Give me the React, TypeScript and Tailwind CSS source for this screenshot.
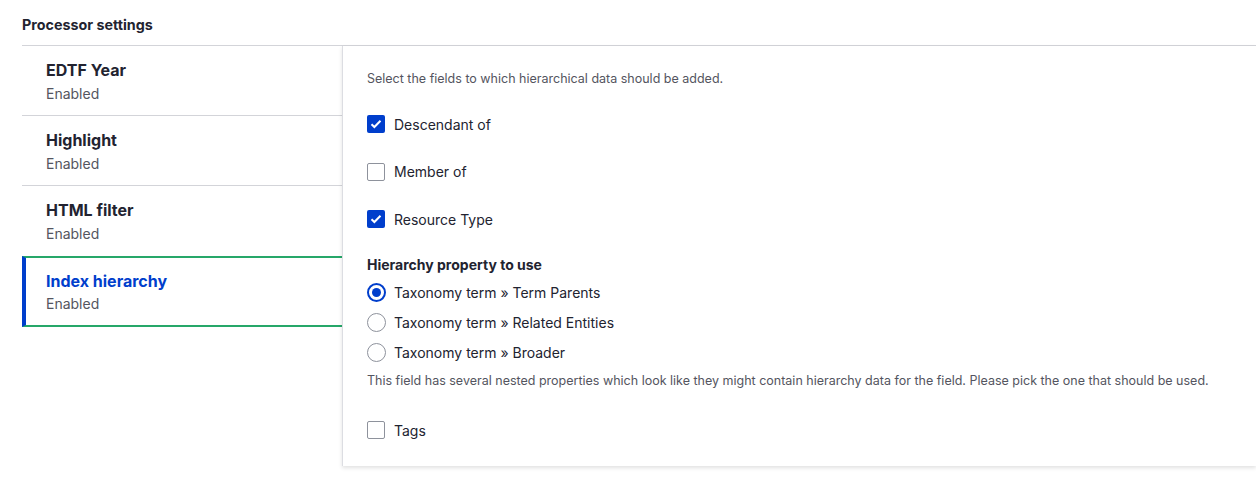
import React from "react";

const tabs = [
  { title: "EDTF Year", summary: "Enabled" },
  { title: "Highlight", summary: "Enabled" },
  { title: "HTML filter", summary: "Enabled" },
  { title: "Index hierarchy", summary: "Enabled", active: true },
];

function Checkbox({ checked, label }: { checked?: boolean; label: string }) {
  return (
    <label className="flex h-[24px] items-center gap-[9px] text-[14px] text-[#222330]">
      {checked ? (
        <span className="flex h-[18px] w-[18px] items-center justify-center rounded-[2px] bg-[#003ecc]">
          <svg width="12" height="10" viewBox="0 0 12 10" fill="none">
            <path d="M1.5 5.2 4.4 8 10.5 1.8" stroke="#fff" strokeWidth="2" />
          </svg>
        </span>
      ) : (
        <span className="h-[18px] w-[18px] rounded-[2px] border border-[#8e929c] bg-white" />
      )}
      {label}
    </label>
  );
}

function Radio({ checked, label }: { checked?: boolean; label: string }) {
  return (
    <label className="flex h-[30px] items-center gap-[8px] text-[14px] text-[#222330]">
      {checked ? (
        <span className="flex h-[19px] w-[19px] items-center justify-center rounded-full border-2 border-[#003ecc] bg-white">
          <span className="h-[9px] w-[9px] rounded-full bg-[#003ecc]" />
        </span>
      ) : (
        <span className="h-[19px] w-[19px] rounded-full border border-[#8e929c] bg-white" />
      )}
      {label}
    </label>
  );
}

export default function App() {
  return (
    <div className="min-h-[477px] bg-white pl-[22px] pt-[16px] font-['Inter',sans-serif] text-[#222330]">
      <h3 className="text-[14.3px] font-bold leading-[18px]">Processor settings</h3>

      <div className="mt-[11px] flex border-t border-[#d3d4d9]">
        <ul className="w-[320px] shrink-0">
          {tabs.map((tab, i) => {
            const nextActive = tabs[i + 1]?.active;
            if (tab.active) {
              return (
                <li
                  key={tab.title}
                  className="border-y-2 border-l-4 border-y-[#26a769] border-l-[#003ecc] pb-[10px] pl-[20px] pt-[13px]"
                >
                  <div className="text-[16px] font-bold leading-[20px] text-[#003ecc]">{tab.title}</div>
                  <div className="mt-[2px] text-[14px] leading-[22px] text-[#545560]">{tab.summary}</div>
                </li>
              );
            }
            return (
              <li
                key={tab.title}
                className={`pl-[24px] pt-[14px] ${nextActive ? "pb-[11px]" : "border-b border-[#d3d4d9] pb-[10px]"}`}
              >
                <div className="text-[16px] font-bold leading-[20px]">{tab.title}</div>
                <div className="mt-[3px] text-[14px] leading-[22px] text-[#545560]">{tab.summary}</div>
              </li>
            );
          })}
        </ul>

        <div className="flex-1 border-l border-[#dcdde2] bg-white pb-[24px] pl-[24px] pt-[24px] shadow-[0_2px_4px_rgba(0,0,0,0.12)]">
          <p className="text-[12.5px] leading-[18px] text-[#545560]">
            Select the fields to which hierarchical data should be added.
          </p>

          <div className="mt-[24px] flex flex-col gap-[23.5px]">
            <Checkbox checked label="Descendant of" />
            <Checkbox label="Member of" />
            <Checkbox checked label="Resource Type" />
          </div>

          <div className="mt-[24px] text-[14px] font-bold leading-[20px]">Hierarchy property to use</div>
          <div className="mt-[2px] flex flex-col">
            <Radio checked label="Taxonomy term » Term Parents" />
            <Radio label="Taxonomy term » Related Entities" />
            <Radio label="Taxonomy term » Broader" />
          </div>
          <p className="mt-[6px] text-[12.5px] leading-[16px] text-[#545560]">
            This field has several nested properties which look like they might contain hierarchy data for the field. Please pick the one that should be used.
          </p>

          <div className="mt-[29px]">
            <Checkbox label="Tags" />
          </div>
        </div>
      </div>
    </div>
  );
}
